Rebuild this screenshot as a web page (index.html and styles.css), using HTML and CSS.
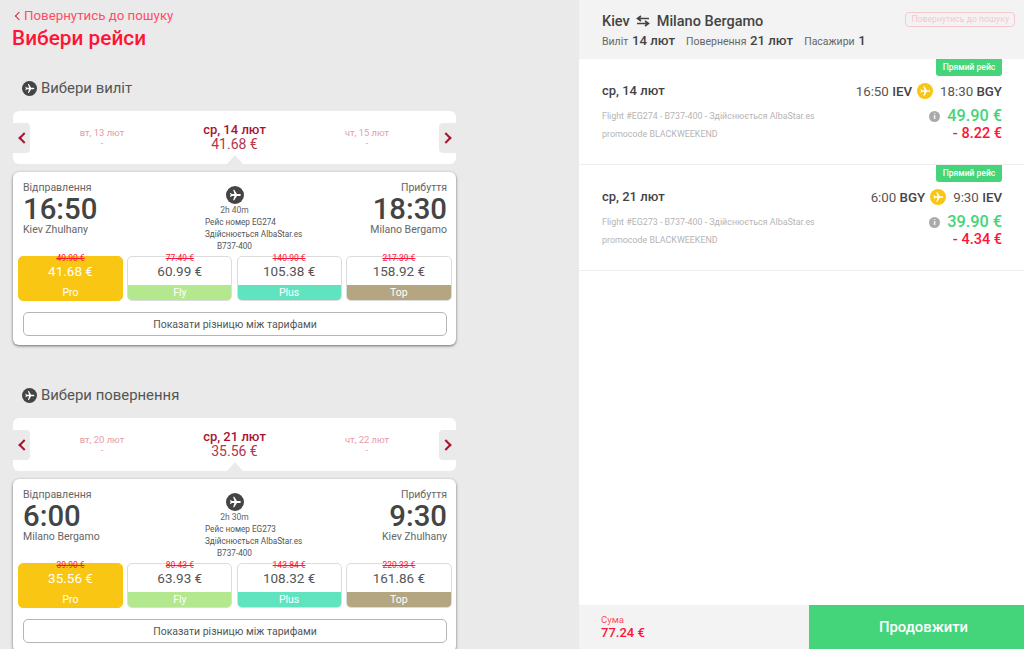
FILE: index.html
```html
<!DOCTYPE html>
<html lang="uk">
<head>
  <meta charset="UTF-8" />
  <title>Вибери рейси</title>
  <link rel="stylesheet" href="styles.css">
</head>
<body>
  <svg class="sprite" width="0" height="0">
    <symbol id="plane" viewBox="0 0 24 24">
      <path d="M22 12c0-1-.8-1.6-1.7-1.6h-5L10.700 3H8.800l2.300 7.400H6.500L5 8.500H3.500l1 3.500-1 3.500H5l1.500-1.900h4.600L8.800 21h1.900l4.600-7.400h5c.9 0 1.700-.6 1.700-1.600z" />
    </symbol>
  </svg>

  <main class="left">
    <a class="back-link"><span class="back-arrow"></span>Повернутись до пошуку</a>
    <h1>Вибери рейси</h1>

    <!-- Outbound -->
    <section class="leg">
      <h2 class="leg-title"><span class="round-icon small"><svg><use href="#plane" /></svg></span>Вибери виліт</h2>
      <div class="date-strip">
        <div class="arrow-btn prev"><span></span></div>
        <div class="date-cell side"><b>вт, 13 лют</b><i>-</i></div>
        <div class="date-cell current"><b>ср, 14 лют</b><i>41.68 €</i></div>
        <div class="date-cell side"><b>чт, 15 лют</b><i>-</i></div>
        <div class="arrow-btn next"><span></span></div>
      </div>
      <div class="flight-card">
        <div class="flight-top">
          <div class="endpoint">
            <div class="ep-label">Відправлення</div>
            <div class="ep-time">16:50</div>
            <div class="ep-city">Kiev Zhulhany</div>
          </div>
          <div class="flight-mid">
            <span class="round-icon"><svg><use href="#plane" /></svg></span>
            <div class="duration">2h 40m</div>
            <div class="mid-info">
              <p>Рейс номер EG274</p>
              <p>Здійснюється AlbaStar.es</p>
              <p class="craft">B737-400</p>
            </div>
          </div>
          <div class="endpoint to">
            <div class="ep-label">Прибуття</div>
            <div class="ep-time">18:30</div>
            <div class="ep-city">Milano Bergamo</div>
          </div>
        </div>
        <div class="fares">
          <div class="fare pro"><s>49.90 €</s><div class="fare-price">41.68 €</div><div class="fare-name">Pro</div></div>
          <div class="fare fly"><s>77.49 €</s><div class="fare-price">60.99 €</div><div class="fare-name">Fly</div></div>
          <div class="fare plus"><s>140.90 €</s><div class="fare-price">105.38 €</div><div class="fare-name">Plus</div></div>
          <div class="fare top"><s>217.39 €</s><div class="fare-price">158.92 €</div><div class="fare-name">Top</div></div>
        </div>
        <button class="diff-btn">Показати різницю між тарифами</button>
      </div>
    </section>

    <!-- Return -->
    <section class="leg">
      <h2 class="leg-title"><span class="round-icon small"><svg><use href="#plane" /></svg></span>Вибери повернення</h2>
      <div class="date-strip">
        <div class="arrow-btn prev"><span></span></div>
        <div class="date-cell side"><b>вт, 20 лют</b><i>-</i></div>
        <div class="date-cell current"><b>ср, 21 лют</b><i>35.56 €</i></div>
        <div class="date-cell side"><b>чт, 22 лют</b><i>-</i></div>
        <div class="arrow-btn next"><span></span></div>
      </div>
      <div class="flight-card">
        <div class="flight-top">
          <div class="endpoint">
            <div class="ep-label">Відправлення</div>
            <div class="ep-time">6:00</div>
            <div class="ep-city">Milano Bergamo</div>
          </div>
          <div class="flight-mid">
            <span class="round-icon"><svg><use href="#plane" /></svg></span>
            <div class="duration">2h 30m</div>
            <div class="mid-info">
              <p>Рейс номер EG273</p>
              <p>Здійснюється AlbaStar.es</p>
              <p class="craft">B737-400</p>
            </div>
          </div>
          <div class="endpoint to">
            <div class="ep-label">Прибуття</div>
            <div class="ep-time">9:30</div>
            <div class="ep-city">Kiev Zhulhany</div>
          </div>
        </div>
        <div class="fares">
          <div class="fare pro"><s>39.90 €</s><div class="fare-price">35.56 €</div><div class="fare-name">Pro</div></div>
          <div class="fare fly"><s>80.43 €</s><div class="fare-price">63.93 €</div><div class="fare-name">Fly</div></div>
          <div class="fare plus"><s>143.84 €</s><div class="fare-price">108.32 €</div><div class="fare-name">Plus</div></div>
          <div class="fare top"><s>220.33 €</s><div class="fare-price">161.86 €</div><div class="fare-name">Top</div></div>
        </div>
        <button class="diff-btn">Показати різницю між тарифами</button>
      </div>
    </section>
  </main>

  <aside class="right">
    <header class="summary-head">
      <div class="route-row">
        <div class="route">Kiev
          <svg class="swap" viewBox="0 0 14 12"><path d="M5 1 1.500 3.500 5 6M1.500 3.500H13M9 6l3.500 2.500L9 11M12.500 8.500H1" /></svg>
          Milano Bergamo</div>
        <a class="back-small">Повернутись до пошуку</a>
      </div>
      <div class="trip-meta">
        <span>Виліт <b>14 лют</b></span>
        <span>Повернення <b>21 лют</b></span>
        <span>Пасажири <b>1</b></span>
      </div>
    </header>

    <div class="sel-flight">
      <div class="direct-tag">Прямий рейс</div>
      <div class="sel-row">
        <div class="sel-date">ср, 14 лют</div>
        <div class="sel-times">16:50 <b>IEV</b><span class="yellow-icon"><svg><use href="#plane" /></svg></span>18:30 <b>BGY</b></div>
      </div>
      <div class="sel-row lower">
        <div class="sel-notes">
          <p>Flight #EG274 - B737-400 - Здійснюється AlbaStar.es</p>
          <p>promocode BLACKWEEKEND</p>
        </div>
        <div class="sel-prices">
          <div class="sel-price"><span class="info-dot">i</span>49.90 €</div>
          <div class="sel-discount">- 8.22 €</div>
        </div>
      </div>
    </div>

    <div class="sel-flight">
      <div class="direct-tag">Прямий рейс</div>
      <div class="sel-row">
        <div class="sel-date">ср, 21 лют</div>
        <div class="sel-times">6:00 <b>BGY</b><span class="yellow-icon"><svg><use href="#plane" /></svg></span>9:30 <b>IEV</b></div>
      </div>
      <div class="sel-row lower">
        <div class="sel-notes">
          <p>Flight #EG273 - B737-400 - Здійснюється AlbaStar.es</p>
          <p>promocode BLACKWEEKEND</p>
        </div>
        <div class="sel-prices">
          <div class="sel-price"><span class="info-dot">i</span>39.90 €</div>
          <div class="sel-discount">- 4.34 €</div>
        </div>
      </div>
    </div>

    <footer class="summary-foot">
      <div class="total">
        <div class="total-label">Сума</div>
        <div class="total-value">77.24 €</div>
      </div>
      <button class="continue-btn">Продовжити</button>
    </footer>
  </aside>
</body>
</html>
```

FILE: styles.css
```css
html, body {
  height: 100%;
}

body {
  margin: 0;
  display: flex;
  height: 649px;
  overflow: hidden;
  background-color: #fff;
  font-family: Roboto, 'Liberation Sans', sans-serif;
  color: #444;
}

.sprite {
  position: absolute;
}

p {
  margin: 0;
}

.left {
  width: 579px;
  flex: none;
  box-sizing: border-box;
  padding: 8px 123px 0 13px;
  background-color: #eaeaea;
}

.back-link {
  display: flex;
  align-items: center;
  font-size: 13.300px;
  line-height: 15px;
  color: #ff4d67;
  padding-left: 1px;
}

.back-arrow {
  width: 5px;
  height: 5px;
  margin: 0 2px 0 2px;
  border-left: 1.500px solid #d8213f;
  border-bottom: 1.500px solid #d8213f;
  transform: rotate(45deg);
}

h1 {
  margin: 3px 0 0 -1px;
  font-size: 20.800px;
  line-height: 25px;
  font-weight: 500;
  color: #ff1437;
}

.leg {
  margin-top: 27px;
}

.leg + .leg {
  margin-top: 40px;
}

.leg-title {
  display: flex;
  align-items: center;
  margin: 0 0 13px 9px;
  height: 20px;
  font-size: 14.900px;
  font-weight: 400;
  color: #555;
}

.round-icon {
  display: block;
  width: 18px;
  height: 18px;
  border-radius: 50%;
  background-color: #444;
}

.round-icon svg {
  display: block;
  width: 100%;
  height: 100%;
  fill: #fff;
  transform: scale(0.78);
}

.round-icon.small {
  width: 15px;
  height: 15px;
  margin-right: 4px;
}

.date-strip {
  position: relative;
  display: flex;
  align-items: center;
  height: 53px;
  background-color: #fff;
  border-radius: 6px;
}

/* little notch pointing at the card */
.date-strip::after {
  content: "";
  position: absolute;
  left: 214px;
  bottom: 0;
  border-left: 8px solid transparent;
  border-right: 8px solid transparent;
  border-bottom: 9px solid #eaeaea;
}

.arrow-btn {
  flex: none;
  display: flex;
  align-items: center;
  justify-content: center;
  width: 17px;
  height: 30px;
  background-color: #eaeaea;
  border-radius: 0 4px 4px 0;
}

.arrow-btn.next {
  border-radius: 4px 0 0 4px;
}

.arrow-btn span {
  width: 6px;
  height: 6px;
  margin-left: 4px;
  border-left: 2px solid #a9142f;
  border-bottom: 2px solid #a9142f;
  transform: rotate(45deg);
}

.arrow-btn.next span {
  margin: 0 4px 0 0;
  transform: rotate(225deg);
}

.date-cell {
  flex: 1;
  text-align: center;
}

.date-cell b,
.date-cell i {
  display: block;
  font-style: normal;
}

.date-cell.side {
  color: #e79aa6;
  font-size: 9.400px;
  line-height: 10px;
}

.date-cell.side b {
  font-weight: 400;
}

.date-cell.current {
  color: #a9142f;
  flex: 0 0 121px;
}

.date-cell.current b {
  font-size: 13px;
  line-height: 14px;
  font-weight: 500;
}

.date-cell.current i {
  font-size: 14px;
  line-height: 15px;
  color: #b5354c;
}

.flight-card {
  margin-top: 8px;
  padding: 10px 4px 9px 5px;
  background-color: #fff;
  border-radius: 6px;
  box-shadow: 0 1px 3px rgba(0, 0, 0, 0.55);
}

.flight-top {
  display: flex;
  justify-content: space-between;
  height: 74px;
  padding: 0 5px;
}

.endpoint {
  width: 140px;
}

.endpoint.to {
  text-align: right;
}

.ep-label,
.ep-city {
  font-size: 10.500px;
  line-height: 12px;
  color: #666;
}

.ep-time {
  font-size: 29.300px;
  line-height: 30px;
  font-weight: 500;
  color: #444;
}

.flight-mid {
  width: 110px;
  display: flex;
  flex-direction: column;
  align-items: center;
  padding-top: 4px;
}

.duration {
  margin-left: -1px;
  font-size: 8.500px;
  line-height: 12px;
  color: #666;
}

.mid-info {
  align-self: flex-start;
  margin-left: 25px;
  white-space: nowrap;
  font-size: 8.200px;
  line-height: 12px;
  color: #555;
}

.craft {
  padding-left: 12px;
}

.fares {
  display: grid;
  grid-template-columns: 105px 105px 105px 106px;
  column-gap: 4.300px;
}

.fare {
  position: relative;
  box-sizing: border-box;
  height: 45px;
  text-align: center;
  border: 1px solid #dcdcdc;
  border-radius: 5px;
}

.fare s {
  display: block;
  margin-top: -2px;
  font-size: 8.500px;
  line-height: 7px;
  color: #ff1437;
}

.fare-price {
  font-size: 13.500px;
  line-height: 18px;
  color: #555;
}

.fare-name {
  position: absolute;
  left: 0;
  right: 0;
  bottom: 0;
  height: 15px;
  line-height: 16px;
  font-size: 10.500px;
  color: #fff;
  border-radius: 0 0 4px 4px;
}

.fare.pro {
  background-color: #f9c614;
  border-color: #f9c614;
}

.fare.pro .fare-price {
  color: #fff;
}

.fly .fare-name {
  background-color: #b3e88f;
}

.plus .fare-name {
  background-color: #60e4bf;
}

.top .fare-name {
  background-color: #b5a682;
}

.diff-btn {
  display: block;
  width: 424px;
  height: 24px;
  margin: 11px 0 0 5px;
  padding: 0;
  background-color: #fff;
  border: 1px solid #b5b5b5;
  border-radius: 5px;
  font-family: inherit;
  font-size: 10.500px;
  color: #555;
}

.right {
  position: relative;
  flex: 1;
}

.summary-head {
  box-sizing: border-box;
  height: 59px;
  padding: 12px 9px 0 23px;
  background-color: #f3f3f3;
}

.route-row {
  display: flex;
  justify-content: space-between;
  align-items: flex-start;
}

.route {
  display: flex;
  align-items: center;
  height: 18px;
  font-size: 14.500px;
  font-weight: 500;
  color: #444;
}

.swap {
  width: 14px;
  height: 12px;
  margin: 0 7px 0 6px;
  fill: none;
  stroke: #444;
  stroke-width: 1.600;
}

.back-small {
  box-sizing: border-box;
  height: 15px;
  padding: 0 5px;
  border: 1px solid #f8c6cf;
  border-radius: 4px;
  font-size: 8.700px;
  line-height: 13px;
  color: #f8c6cf;
}

.trip-meta {
  display: flex;
  gap: 11px;
  margin-top: 3px;
  font-size: 10.500px;
  line-height: 16px;
  color: #666;
}

.trip-meta b {
  font-size: 13.200px;
  font-weight: 500;
  color: #444;
  margin-left: 1px;
}

.sel-flight {
  position: relative;
  box-sizing: border-box;
  height: 106px;
  padding: 24px 22px 0 23px;
  border-bottom: 1px solid #eee;
}

.direct-tag {
  position: absolute;
  top: 0;
  right: 22px;
  height: 17px;
  width: 66px;
  text-align: center;
  background-color: #44d47a;
  border-radius: 0 0 3px 3px;
  font-size: 8.500px;
  font-weight: 500;
  line-height: 17px;
  color: #fff;
}

.sel-row {
  display: flex;
  justify-content: space-between;
  align-items: center;
}

.sel-date {
  margin-top: -2px;
  font-size: 13px;
  font-weight: 500;
  color: #444;
}

.sel-times {
  display: flex;
  align-items: center;
  white-space: pre;
  font-size: 13.300px;
  color: #555;
}

.sel-times b {
  font-weight: 500;
  color: #444;
}

.yellow-icon {
  width: 16px;
  height: 16px;
  margin: 0 7px 0 5px;
  border-radius: 50%;
  background-color: #f9c614;
}

.yellow-icon svg {
  display: block;
  width: 100%;
  height: 100%;
  fill: #fff;
  transform: scale(0.8);
}

.sel-row.lower {
  align-items: flex-start;
  margin-top: 8px;
}

.sel-notes {
  font-size: 8.900px;
  line-height: 18px;
  color: #b5b5b5;
}

.sel-prices {
  text-align: right;
}

.sel-price {
  display: flex;
  align-items: center;
  justify-content: flex-end;
  font-size: 16.300px;
  line-height: 18px;
  font-weight: 500;
  color: #44d47a;
}

.info-dot {
  width: 11px;
  height: 11px;
  margin-right: 7px;
  border-radius: 50%;
  background-color: #aaa;
  font-size: 8px;
  font-weight: 700;
  line-height: 11px;
  text-align: center;
  color: #fff;
}

.sel-discount {
  font-size: 14.500px;
  line-height: 18px;
  font-weight: 500;
  color: #ff1437;
}

.summary-foot {
  position: absolute;
  left: 0;
  right: 0;
  bottom: 0;
  display: flex;
  height: 44px;
}

.total {
  flex: 1;
  padding: 9px 0 0 22px;
  background-color: #f3f3f3;
}

.total-label {
  font-size: 9.500px;
  line-height: 11px;
  color: #ff4d67;
}

.total-value {
  font-size: 13px;
  line-height: 15px;
  font-weight: 500;
  color: #ff1437;
}

.continue-btn {
  width: 215px;
  padding: 0 0 0 14px;
  border: none;
  background-color: #44d47a;
  font-family: inherit;
  font-size: 14.800px;
  font-weight: 500;
  color: #fff;
}
```
